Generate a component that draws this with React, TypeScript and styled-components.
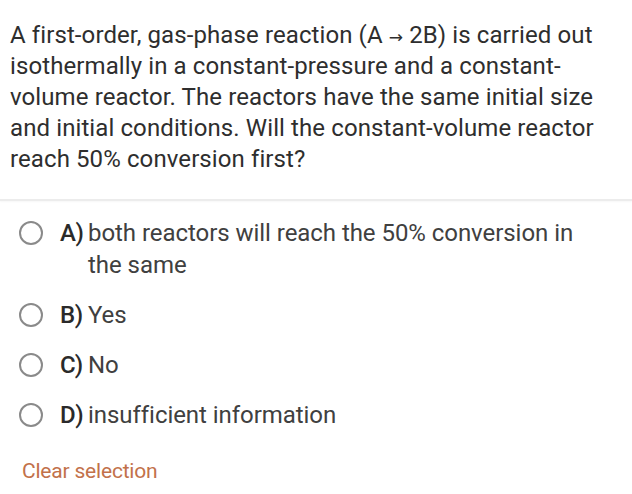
import React from 'react'
import styled, {createGlobalStyle} from 'styled-components'

const GlobalStyle = createGlobalStyle`
    body {
        margin: 0;
        background: #ffffff;
        font-family: Roboto, "Noto Sans", sans-serif;
    }
`

const options = [
    {key: 'A)', text: 'both reactors will reach the 50% conversion in the same'},
    {key: 'B)', text: 'Yes'},
    {key: 'C)', text: 'No'},
    {key: 'D)', text: 'insufficient information'},
]

const App: React.FC = () => {
    return (
        <>
            <GlobalStyle />
            <Card>
                <Question>
                    A first-order, gas-phase reaction (A <Arrow>→</Arrow> 2B) is carried out
                    isothermally in a constant-pressure and a constant-volume reactor. The
                    reactors have the same initial size and initial conditions. Will the
                    constant-volume reactor reach 50% conversion first?
                </Question>
                <Divider />
                <OptionList>
                    {options.map((o) => (
                        <Option key={o.key}>
                            <Radio />
                            <OptionKey>{o.key}</OptionKey>
                            <OptionText>{o.text}</OptionText>
                        </Option>
                    ))}
                </OptionList>
                <ClearButton>Clear selection</ClearButton>
            </Card>
        </>
    )
}

export default App

const Card = styled.div`
    width: 632px;
    height: 494px;
    display: flex;
    flex-direction: column;
    box-sizing: border-box;
    padding-top: 20px;
`

const Question = styled.p`
    margin: 0;
    padding: 0 18px 0 10px;
    font-size: 24px;
    line-height: 31px;
    color: #2e2e2e;
    letter-spacing: 0.1px;
`

const Arrow = styled.span`
    font-family: "DejaVu Sans", sans-serif;
    font-size: 17px;
    line-height: 1;
`

const Divider = styled.div`
    margin-top: 24px;
    height: 2px;
    background: #ececec;
    box-shadow: 0 1px 2px rgba(0, 0, 0, 0.04);
`

const OptionList = styled.div`
    display: flex;
    flex-direction: column;
    gap: 18px;
    padding: 16px 30px 0 19px;
`

const Option = styled.div`
    display: flex;
    align-items: flex-start;
    font-size: 24px;
    line-height: 32px;
    color: #404040;
    letter-spacing: -0.05px;
`

const Radio = styled.span`
    flex: none;
    width: 20px;
    height: 20px;
    margin-top: 4px;
    border: 2px solid #8a8a8a;
    border-radius: 50%;
`

const OptionKey = styled.span`
    flex: none;
    margin-left: 17px;
    width: 28px;
    font-weight: 500;
    color: #2a2a2a;
    letter-spacing: -0.5px;
`

const OptionText = styled.span`
    flex: 1;
`

const ClearButton = styled.span`
    margin: 28px 0 0 22px;
    font-size: 21px;
    line-height: 24px;
    color: #c2714a;
    letter-spacing: -0.2px;
`
